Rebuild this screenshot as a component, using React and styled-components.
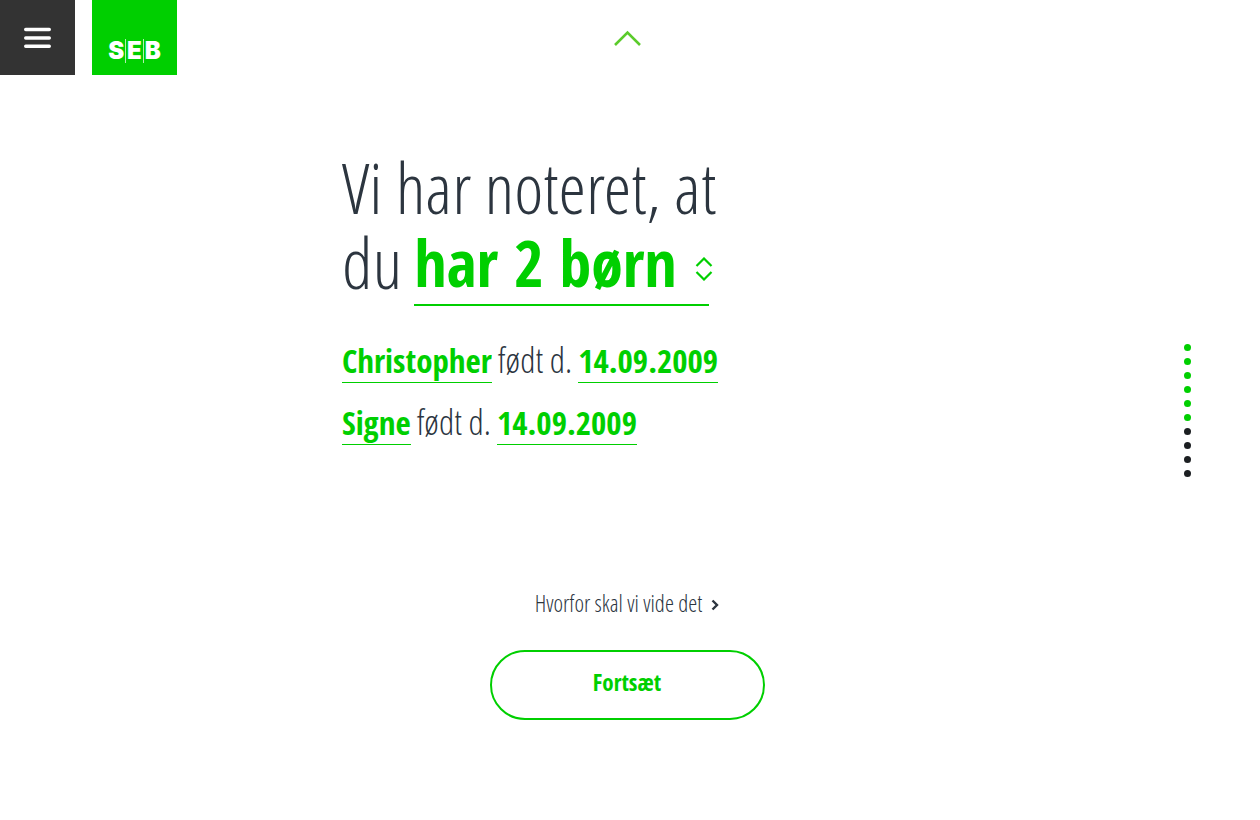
import React, { useState } from 'react';
import styled, { createGlobalStyle } from 'styled-components';

const GREEN = '#00cf00';
const INK = '#2c353f';

const LIGHT = '"Open Sans Condensed Light", "Open Sans Light Condensed", "Lato", sans-serif';
const BOLD = '"Open Sans Condensed", "Lato", sans-serif';

const GlobalStyle = createGlobalStyle`
    *, *::before, *::after {
        box-sizing: border-box;
    }

    body {
        margin: 0;
        background-color: #fff;
        color: ${INK};
        font-family: ${LIGHT};
        font-weight: 300;
    }

    button, input, select {
        font-family: ${BOLD};
        font-weight: 700;
    }
`

const Page = styled.div`
    display: grid;
    grid-template-columns: 1fr minmax(0, 570px) 1fr;
    grid-template-rows: auto 1fr;
    min-height: 100vh;
    padding-right: 6px;
`

const Header = styled.header`
    grid-column: 1 / -1;
    grid-row: 1;
    display: grid;
    grid-template-columns: 1fr auto 1fr;
`

const Brand = styled.div`
    display: flex;
    gap: 17px;
`

const MenuButton = styled.button`
    display: flex;
    align-items: center;
    justify-content: center;
    width: 75px;
    height: 75px;
    padding: 0;
    border: 0;
    background-color: #333;
    cursor: pointer;
`

const Logo = styled.a`
    display: flex;
    align-items: flex-end;
    justify-content: center;
    width: 85px;
    height: 75px;
    padding-bottom: 12px;
    background-color: ${GREEN};
    color: #fff;
    font-family: "Inter", sans-serif;
    font-size: 24px;
    font-weight: 900;
    line-height: 24px;
    text-decoration: none;
`

const LogoLetter = styled.span`
    padding: 0 1px;

    & + & {
        border-left: 1px solid #b0f0b0;
    }
`

const BackButton = styled.button`
    align-self: center;
    display: flex;
    padding: 0;
    border: 0;
    background: none;
    cursor: pointer;
`

const Question = styled.main`
    grid-column: 2;
    grid-row: 2;
    padding: 75px 0 40px;
`

const Title = styled.h1`
    margin: 0 0 36px;
    font-size: 70px;
    font-weight: 300;
    line-height: 75px;
`

const TitleLine = styled.span`
    display: flex;
    gap: 12px;
`

const Picker = styled.span`
    display: flex;
    align-items: center;
    padding-bottom: 3px;
    border-bottom: 2px solid ${GREEN};
    color: ${GREEN};

    svg {
        margin: 12px -4px 0 -16px;
        pointer-events: none;
    }
`

const PickerSelect = styled.select`
    appearance: none;
    height: 76px;
    margin: 0;
    padding: 0 34px 0 0;
    border: 0;
    background: none;
    color: inherit;
    font-size: 64px;
    line-height: 76px;
    cursor: pointer;
`

const Children = styled.ul`
    display: flex;
    flex-direction: column;
    gap: 21px;
    margin: 0;
    padding: 0;
    list-style: none;
`

const Child = styled.li`
    display: flex;
    gap: 6px;
    font-size: 35px;
    line-height: 36px;
`

const Field = styled.input`
    field-sizing: content;
    height: 41px;
    padding: 0 0 4px;
    border: 0;
    border-bottom: 1px solid ${GREEN};
    background: none;
    color: ${GREEN};
    font-size: 33px;
    line-height: 36px;
`

const Actions = styled.div`
    display: flex;
    flex-direction: column;
    align-items: center;
    gap: 35px;
    margin-top: 146px;
`

const WhyLink = styled.a`
    display: flex;
    align-items: center;
    gap: 9px;
    color: ${INK};
    font-size: 23px;
    line-height: 24px;
    text-decoration: none;

    svg {
        margin-top: 3px;
    }
`

const ContinueButton = styled.button`
    width: 275px;
    height: 70px;
    padding: 0 0 6px;
    border: 2px solid ${GREEN};
    border-radius: 35px;
    background: none;
    color: ${GREEN};
    font-size: 23px;
    cursor: pointer;
`

const Steps = styled.nav`
    grid-column: 3;
    grid-row: 1 / -1;
    align-self: center;
    justify-self: end;
    display: flex;
    flex-direction: column;
    gap: 7px;
    margin-right: 63px;
`

const Step = styled.a`
    width: 7px;
    height: 7px;
    border-radius: 50%;
    background-color: ${props => (props.$done ? GREEN : '#1c1f22')};
`

const STEP_COUNT = 10;
const CURRENT_STEP = 6;

const ChildRow = ({ name, born }) => (
    <Child>
        <Field type="text" aria-label="Navn" defaultValue={name} />
        <span>født d.</span>
        <Field type="text" aria-label="Fødselsdato" defaultValue={born} />
    </Child>
)

const App = () => {
    const [count, setCount] = useState('2');

    return (
        <Page>
            <GlobalStyle />
            <Header>
                <Brand>
                    <MenuButton type="button" aria-label="Menu">
                        <svg width="27" height="21" viewBox="0 0 27 21" fill="none" stroke="#fff" strokeWidth="3.4" strokeLinecap="round">
                            <path d="M1.700 2.500h23.600M1.700 11h23.600M1.700 19.300h23.600" />
                        </svg>
                    </MenuButton>
                    <Logo href="#" aria-label="SEB">
                        <LogoLetter>S</LogoLetter>
                        <LogoLetter>E</LogoLetter>
                        <LogoLetter>B</LogoLetter>
                    </Logo>
                </Brand>
                <BackButton type="button" aria-label="Tilbage">
                    <svg width="27" height="16" viewBox="0 0 27 16" fill="none" stroke="#5bcb2b" strokeWidth="2.6">
                        <path d="M1 15L13.500 2.500L26 15" />
                    </svg>
                </BackButton>
            </Header>

            <Question>
                <Title>
                    <TitleLine>Vi har noteret, at</TitleLine>
                    <TitleLine>
                        du
                        <Picker>
                            <PickerSelect
                                aria-label="Antal børn"
                                value={count}
                                onChange={e => setCount(e.target.value)}
                            >
                                <option value="1">har 1 barn</option>
                                <option value="2">har 2 børn</option>
                                <option value="3">har 3 børn</option>
                            </PickerSelect>
                            <svg width="18" height="24" viewBox="0 0 18 24" fill="none" stroke="currentColor" strokeWidth="2.2">
                                <path d="M1.500 9L9 1.500L16.500 9M1.500 15L9 22.500L16.500 15" />
                            </svg>
                        </Picker>
                    </TitleLine>
                </Title>

                <Children>
                    <ChildRow name="Christopher" born="14.09.2009" />
                    <ChildRow name="Signe" born="14.09.2009" />
                </Children>

                <Actions>
                    <WhyLink href="#">
                        Hvorfor skal vi vide det
                        <svg width="8" height="12" viewBox="0 0 8 12" fill="none" stroke="currentColor" strokeWidth="2.4">
                            <path d="M1.500 1.500L6 6L1.500 10.500" />
                        </svg>
                    </WhyLink>
                    <ContinueButton type="button">Fortsæt</ContinueButton>
                </Actions>
            </Question>

            <Steps aria-label="Trin">
                {Array.from({ length: STEP_COUNT }, (_, i) => (
                    <Step key={i} href="#" aria-label={`Trin ${i + 1}`} $done={i < CURRENT_STEP} />
                ))}
            </Steps>
        </Page>
    );
}

export default App;
